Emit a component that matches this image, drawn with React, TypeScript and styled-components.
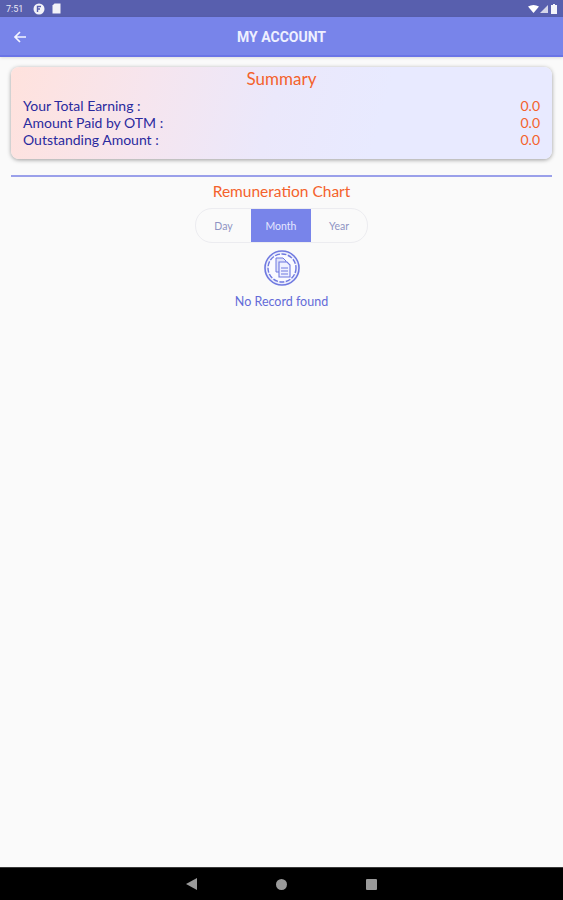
import { useState } from 'react';
import styled, { createGlobalStyle } from 'styled-components';

const GlobalStyle = createGlobalStyle`
  html, body {
    margin: 0;
    padding: 0;
    height: 100%;
    background: #fafafa;
  }
  * {
    box-sizing: border-box;
  }
`;

const Screen = styled.div`
  width: 563px;
  height: 900px;
  display: flex;
  flex-direction: column;
  overflow: hidden;
  font-family: Lato, 'Noto Sans', sans-serif;
  background: #fafafa;
`;

const StatusBar = styled.div`
  height: 17px;
  flex-shrink: 0;
  background: #585fae;
  display: flex;
  align-items: center;
  justify-content: space-between;
  padding: 0 6px 0 6px;
  color: #fff;
`;

const StatusGroup = styled.div`
  display: flex;
  align-items: center;
`;

const Clock = styled.span`
  font-family: Roboto, sans-serif;
  font-size: 9px;
  margin-right: 9px;
  color: #e8e8f5;
`;

const AppBar = styled.header`
  height: 40px;
  flex-shrink: 0;
  background: #7884ea;
  border-bottom: 2px solid #6a74e6;
  box-shadow: 0 1px 3px rgba(0, 0, 0, 0.12);
  display: flex;
  align-items: center;
  position: relative;
  padding: 2px 0 0 13px;
`;

const AppTitle = styled.h1`
  position: absolute;
  inset: 0;
  margin: 0;
  padding-top: 2px;
  display: flex;
  align-items: center;
  justify-content: center;
  font-family: Roboto, sans-serif;
  font-size: 14px;
  font-weight: 700;
  color: #eef0ff;
`;

const Content = styled.main`
  flex: 1;
  padding: 10px 11px 0;
  display: flex;
  flex-direction: column;
  align-items: center;
`;

const SummaryCard = styled.section`
  width: 100%;
  height: 92px;
  border-radius: 8px;
  background: linear-gradient(105deg, #ffe2dd 0%, #f6e5ee 25%, #ebe8fb 48%, #e8eaff 68%, #e8eaff 100%);
  box-shadow: 0 1px 4px rgba(0, 0, 0, 0.38);
  padding: 2px 12px 0;
`;

const SummaryTitle = styled.h2`
  margin: 0 0 8px;
  text-align: center;
  font-size: 17px;
  line-height: 20px;
  font-weight: 400;
  color: #f4622c;
`;

const SummaryRow = styled.div`
  display: flex;
  justify-content: space-between;
  font-size: 14px;
  line-height: 17px;
  color: #2a2a9e;
`;

const Amount = styled.span`
  color: #f4622c;
`;

const Divider = styled.div`
  width: 100%;
  height: 2px;
  margin-top: 16px;
  flex-shrink: 0;
  background: #9aa0ea;
`;

const ChartTitle = styled.h3`
  margin: 5px 0 7px;
  font-size: 15.5px;
  line-height: 19px;
  font-weight: 400;
  color: #f4622c;
`;

const Segments = styled.div`
  width: 173px;
  height: 35px;
  display: flex;
  border: 1px solid #ececf0;
  border-radius: 17px;
  overflow: hidden;
`;

const Segment = styled.button<{ $active?: boolean }>`
  flex: ${p => (p.$active ? '0 0 60px' : '1')};
  padding: 0;
  border: 0;
  font-family: Lato, sans-serif;
  font-size: 10.5px;
  color: ${p => (p.$active ? '#e6e8ff' : '#8f94c4')};
  background: ${p => (p.$active ? '#7884ea' : 'transparent')};
  &:first-child {
    flex: 0 0 55px;
  }
`;

const EmptyIcon = styled.svg`
  width: 36px;
  height: 36px;
  margin-top: 7px;
`;

const EmptyText = styled.p`
  margin: 8px 0 0;
  font-size: 12.5px;
  line-height: 16px;
  color: #636bd8;
`;

const NavBar = styled.nav`
  height: 33px;
  flex-shrink: 0;
  background: #000;
  border-top: 1px solid #3a3a3a;
  display: flex;
  align-items: center;
  justify-content: center;
  gap: 79px;
`;

function App() {
  const [range, setRange] = useState('Month');
  return (
    <>
      <GlobalStyle />
      <Screen>
        <StatusBar>
          <StatusGroup>
            <Clock>7:51</Clock>
            <svg width="12" height="12" viewBox="0 0 12 12" style={{ marginLeft: 1 }}>
              <circle cx="6" cy="6" r="5.5" fill="#f2f2f8" />
              <path d="M4.5 9V3.5h3.5M4.5 6h2.5" stroke="#585fae" strokeWidth="1.4" fill="none" />
            </svg>
            <svg width="9" height="11" viewBox="0 0 9 11" style={{ marginLeft: 7 }}>
              <path d="M2.5 0.5H8.5V10.5H0.5V2.5Z" fill="#f2f2f8" />
            </svg>
          </StatusGroup>
          <StatusGroup>
            <svg width="11" height="8" viewBox="0 0 11 8">
              <path d="M0 1.5Q5.5-1.5 11 1.5L5.5 8Z" fill="#fff" />
            </svg>
            <svg width="8" height="8" viewBox="0 0 8 8" style={{ marginLeft: 1 }}>
              <path d="M8 0V8H0Z" fill="#d5d6ea" />
            </svg>
            <svg width="6" height="10" viewBox="0 0 6 10" style={{ marginLeft: 3 }}>
              <path d="M2 0H4V1H6V10H0V1H2Z" fill="#f4f4fa" />
            </svg>
          </StatusGroup>
        </StatusBar>
        <AppBar>
          <svg width="14" height="14" viewBox="0 0 14 14" fill="none" stroke="#f4f5ff" strokeWidth="1.7">
            <path d="M13 7H2M7 2L2 7l5 5" />
          </svg>
          <AppTitle>MY ACCOUNT</AppTitle>
        </AppBar>
        <Content>
          <SummaryCard>
            <SummaryTitle>Summary</SummaryTitle>
            <SummaryRow>
              <span>Your Total Earning :</span>
              <Amount>0.0</Amount>
            </SummaryRow>
            <SummaryRow>
              <span>Amount Paid by OTM :</span>
              <Amount>0.0</Amount>
            </SummaryRow>
            <SummaryRow>
              <span>Outstanding Amount :</span>
              <Amount>0.0</Amount>
            </SummaryRow>
          </SummaryCard>
          <Divider />
          <ChartTitle>Remuneration Chart</ChartTitle>
          <Segments>
            {['Day', 'Month', 'Year'].map(item => (
              <Segment key={item} $active={item === range} onClick={() => setRange(item)}>
                {item}
              </Segment>
            ))}
          </Segments>
          <EmptyIcon viewBox="0 0 36 36" fill="none" stroke="#6f79e0">
            <circle cx="18" cy="18" r="17" strokeWidth="1.6" fill="#eceefc" />
            <circle cx="18" cy="18" r="14" strokeWidth="1.4" strokeDasharray="5 1.5" fill="#fafaff" />
            <path d="M12 8h7l3 3v11h-10z" strokeWidth="1" fill="#dfe2fa" />
            <path d="M15 12h8l3 3v12h-11z" strokeWidth="1.1" fill="#eef0ff" />
            <path d="M17 18h7M17 21h7M17 24h7" strokeWidth="1.1" />
          </EmptyIcon>
          <EmptyText>No Record found</EmptyText>
        </Content>
        <NavBar>
          <svg width="11" height="12" viewBox="0 0 11 12">
            <path d="M11 0V12L0 6Z" fill="#9a9a9a" />
          </svg>
          <svg width="11" height="11" viewBox="0 0 11 11">
            <circle cx="5.5" cy="5.5" r="5.5" fill="#9a9a9a" />
          </svg>
          <svg width="11" height="11" viewBox="0 0 11 11">
            <rect width="11" height="11" rx="1" fill="#9a9a9a" />
          </svg>
        </NavBar>
      </Screen>
    </>
  );
}

export default App;
